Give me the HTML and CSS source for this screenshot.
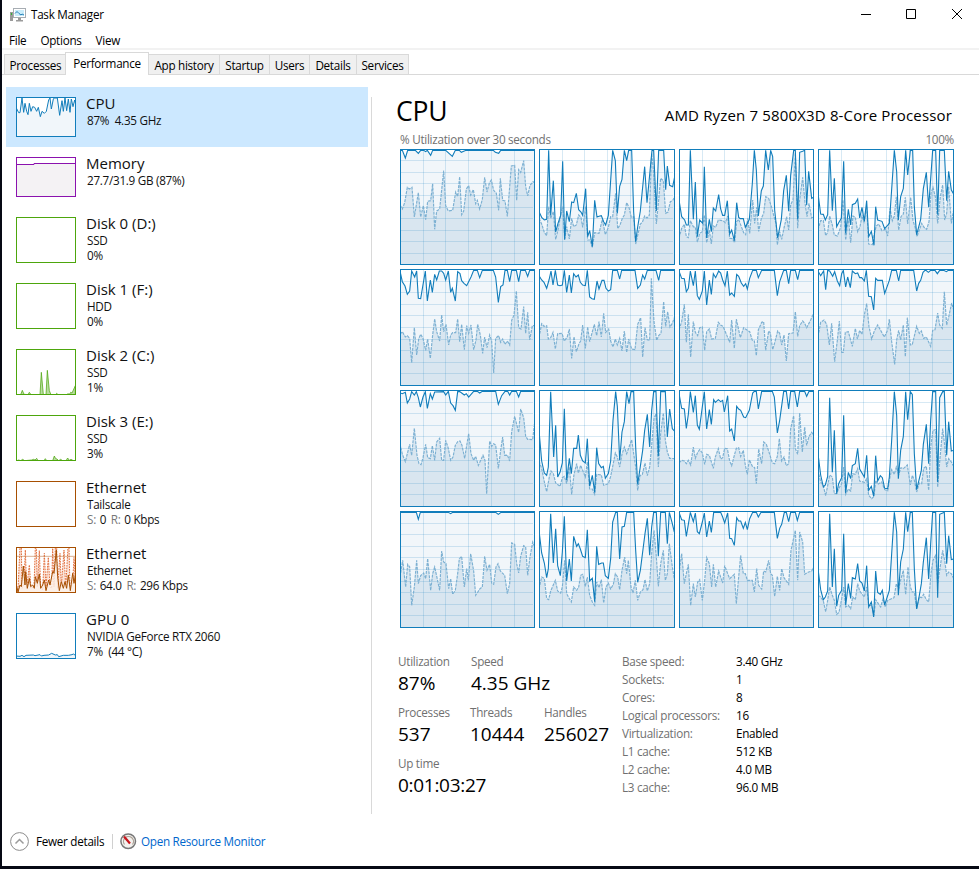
FILE: index.html
```
<!DOCTYPE html>
<html lang="en">
<head>
<meta charset="utf-8">
<title>Task Manager</title>
<link rel="stylesheet" href="styles.css">
</head>
<body>
<div class="window">
  <header class="titlebar">
    <svg class="app-icon" width="16" height="14" viewBox="0 0 16 14">
      <rect x="0" y="4" width="3" height="9" fill="#9a9a9a"/><rect x="1" y="5" width="1" height="2" fill="#2fb62f"/>
      <rect x="3.5" y=".5" width="12" height="9" fill="#fff" stroke="#a7adb3"/>
      <rect x="5" y="2" width="9" height="6" fill="#c9ecfa"/>
      <path d="M5 5.500l2-2 2 2 2 1.500 1-1 2 1" fill="none" stroke="#2580b8"/>
      <path d="M8 10h3v2h2v1.500H6V12h2z" fill="#9b9b9b"/>
    </svg>
    <span class="title">Task Manager</span>
    <svg class="controls" width="103" height="12" viewBox="0 0 103 12" fill="none" stroke="#000">
      <path d="M0 6.500h10M45.500 1.500h9v9h-9zM91 1l10 10M101 1L91 11"/>
    </svg>
  </header>
  <nav class="menu"><span>File</span><span>Options</span><span>View</span></nav>
  <div class="tabs">
    <div class="tab w61">Processes</div>
    <div class="tab active">Performance</div>
    <div class="tab w71">App history</div>
    <div class="tab w50">Startup</div>
    <div class="tab w40">Users</div>
    <div class="tab w47">Details</div>
    <div class="tab w52">Services</div>
  </div>
  <main class="content">
    <aside class="sidebar">
      <div class="item short selected">
        <svg class="thumb cpu" viewBox="51 42 174 114">
          <path class="area" d="M48 70L56 86 60 86 66 42 71 85 75 58 80 82 84 92 88 58 93 82 98 68 104 70 110 82 115 70 121 98 126 82 133 88 139 82 146 48 150 42 154 75 160 45 163 42 172 42 179 94 186 50 190 82 195 42 200 80 205 45 210 85 214 45 219 68 224 48 228 65V159H48z"/>
        </svg>
        <div class="info"><h3>CPU</h3><p>87%&nbsp; 4.35 GHz</p></div>
      </div>
      <div class="item short">
        <svg class="thumb memory" viewBox="3 3 174 114">
          <path class="area" d="M-6 22.500H54V19.500H186V126H-6z"/>
        </svg>
        <div class="info"><h3>Memory</h3><p>27.7/31.9 GB (87%)</p></div>
      </div>
      <div class="item"><svg class="thumb disk"></svg><div class="info"><h3>Disk 0 (D:)</h3><p>SSD</p><p>0%</p></div></div>
      <div class="item"><svg class="thumb disk"></svg><div class="info"><h3>Disk 1 (F:)</h3><p>HDD</p><p>0%</p></div></div>
      <div class="item">
        <svg class="thumb disk" viewBox="51 240 174 132">
          <path class="area" d="M48 374H62L67 361 72 373 84 374 88 367 93 374H120L124 307 130 374H138L142 301 148 362 153 374H167L170 370 174 374H200L204 371 208 373 212 367 216 369 226 347V378H48z"/>
        </svg>
        <div class="info"><h3>Disk 2 (C:)</h3><p>SSD</p><p>1%</p></div>
      </div>
      <div class="item">
        <svg class="thumb disk" viewBox="51 438 174 132">
          <path class="area" d="M48 573L56 570 62 572 68 568 74 572 95 570 101 568 105 570 110 565 114 572 132 572 136 566 140 572 158 572 163 558 167 566 171 567 176 572 182 568 188 572 198 572 203 564 208 571 213 568 220 572 228 572V577H48z"/>
        </svg>
        <div class="info"><h3>Disk 3 (E:)</h3><p>SSD</p><p>3%</p></div>
      </div>
      <div class="item"><svg class="thumb net"></svg><div class="info"><h3>Ethernet</h3><p>Tailscale</p><p><i>S:</i> 0 <i>R:</i> 0 Kbps</p></div></div>
      <div class="item">
        <svg class="thumb net" viewBox="51 234 174 132">
          <path class="send" d="M48 355L54 360 60 231 64 231 66 355 72 340 76 240 80 355 88 285 93 355 102 350 106 231 109 231 112 350 118 242 122 350 128 360 133 250 138 350 145 262 150 350 155 355 158 231 162 350 166 231 170 231 173 355 180 250 184 350 192 240 197 355 204 231 207 231 210 355 218 340 222 262 228 355V369H48z"/>
          <path class="rule" d="M48 259H228"/>
          <path class="area" d="M48 340L54 366 60 345 64 350 70 288 75 345 77 305 82 355 88 325 92 350 98 345 103 355 106 320 112 340 118 312 122 355 128 345 133 330 138 362 146 330 150 345 158 305 162 310 169 240 173 320 178 362 184 335 190 355 195 335 200 355 205 315 211 362 218 310 222 340 227 310V369H48z"/>
        </svg>
        <div class="info"><h3>Ethernet</h3><p>Ethernet</p><p><i>S:</i> 64.0 <i>R:</i> 296 Kbps</p></div>
      </div>
      <div class="item">
        <svg class="thumb cpu" viewBox="51 432 174 132">
          <path class="area" d="M48 558L60 559 66 556 72 560 78 556 100 555 105 557 120 554 124 558 132 556 146 555 155 550 166 555 172 554 176 560 190 556 205 556 216 554 220 552 228 557V570H48z"/>
        </svg>
        <div class="info"><h3>GPU 0</h3><p>NVIDIA GeForce RTX 2060</p><p>7%&nbsp; (44 °C)</p></div>
      </div>
    </aside>
    <section class="detail">
      <div class="heading"><h1>CPU</h1><h2>AMD Ryzen 7 5800X3D 8-Core Processor</h2></div>
      <div class="caption"><span>% Utilization over 30 seconds</span><span class="max">100%</span></div>
      <div class="charts" id="charts"></div>
      <div class="stats">
        <div class="figures">
          <div class="figure-row">
            <div class="figure f73"><span>Utilization</span><b>87%</b></div>
            <div class="figure"><span>Speed</span><b>4.35 GHz</b></div>
          </div>
          <div class="figure-row">
            <div class="figure f72"><span>Processes</span><b>537</b></div>
            <div class="figure f74"><span>Threads</span><b>10444</b></div>
            <div class="figure"><span>Handles</span><b>256027</b></div>
          </div>
          <div class="figure-row"><div class="figure uptime"><span>Up time</span><b>0:01:03:27</b></div></div>
        </div>
        <dl class="specs">
          <dt>Base speed:</dt><dd>3.40 GHz</dd>
          <dt>Sockets:</dt><dd>1</dd>
          <dt>Cores:</dt><dd>8</dd>
          <dt>Logical processors:</dt><dd>16</dd>
          <dt>Virtualization:</dt><dd>Enabled</dd>
          <dt>L1 cache:</dt><dd>512 KB</dd>
          <dt>L2 cache:</dt><dd>4.0 MB</dd>
          <dt>L3 cache:</dt><dd>96.0 MB</dd>
        </dl>
      </div>
    </section>
  </main>
  <footer class="footer">
    <svg width="20" height="20" viewBox="0 0 20 20" fill="none">
      <circle cx="9.500" cy="9.500" r="8.900" stroke="#8c8c8c"/>
      <path d="M5.500 11.500l4-4 4 4" stroke="#9a9a9a" stroke-width="1.500"/>
    </svg>
    <span class="fewer">Fewer details</span>
    <svg class="gauge" width="17" height="17" viewBox="0 0 17 17" fill="none">
      <circle cx="8.200" cy="8.200" r="7.300" fill="#f3f1ee" stroke="#777" stroke-width="1.500"/>
      <path d="M4.500 11.500a5 5 0 1 1 8 0" stroke="#aaa095" stroke-width="1.200"/>
      <path d="M4 3.500l6 7" stroke="#c8141c" stroke-width="2.200"/>
    </svg>
    <a class="monitor">Open Resource Monitor</a>
  </footer>
</div>
<script src="charts.js"></script>
</body>
</html>
```
FILE: styles.css
```
* { box-sizing: border-box; }
body { margin: 0; background: #060914; font: 11.7px/15px "Open Sans", "Noto Sans", sans-serif; letter-spacing: -0.28px; color: #000; }
h1, h2, h3, p, dl, dd { margin: 0; font-weight: 400; }
svg { display: block; flex: none; }
.window { margin-left: 2px; width: 977px; height: 866px; background: #fff; display: flex; flex-direction: column; overflow: hidden; }
.titlebar { height: 30px; display: flex; align-items: center; padding: 0 15px 0 8px; }
.title { margin: -2px 0 0 5px; }
.controls { margin-left: auto; margin-top: -2px; }
.menu { height: 20px; padding: 0 7px; display: flex; gap: 14px; line-height: 20px; border-bottom: 2px solid #f2f2f2; }
.tabs { height: 25px; padding: 2px 0 0 2px; display: flex; align-items: flex-end; background: linear-gradient(#d9d9d9, #d9d9d9) 0 100% / 100% 1px no-repeat; }
.tab { height: 21px; line-height: 20px; text-align: center; background: #f0f0f0; border: 1px solid #d9d9d9; border-left-width: 0; }
.tab:first-child { border-left-width: 1px; border-right-width: 0; padding-left: 1px; }
.active { width: 84px; height: 23px; background: #fff; border-width: 1px 1px 0; }
.w61 { width: 61px; } .w71 { width: 71px; } .w50 { width: 50px; } .w40 { width: 40px; } .w47 { width: 47px; } .w52 { width: 52px; }
.content { flex: 1; display: flex; padding-top: 12px; min-height: 0; }
.sidebar { width: 362px; margin-left: 4px; }
.item { height: 66px; padding: 10px; display: flex; gap: 10px; }
.item.short { height: 60px; }
.selected { background: #cce8ff; }
.thumb { width: 60px; height: 46px; border: 1px solid; background: #fff; }
.short .thumb { height: 40px; }
.cpu { color: #117dbb; --fill: #f1f6fa; }
.memory { color: #8b12ae; --fill: #f4f2f4; }
.disk { color: #4da60c; --fill: #b9dca0; }
.net { color: #a74f01; --fill: #fcf3eb; }
.area { fill: var(--fill); stroke: currentColor; stroke-width: 3; }
.disk .area { stroke-width: 2.200; }
.net .area { fill-opacity: .8; }
.send { fill: #fbe3d8; stroke: #e2703f; stroke-width: 3; stroke-dasharray: 5 3; }
.rule { stroke: #c98a5a; stroke-width: 2; }
.info { color: #111; margin-top: -4px; }
.info h3 { font-size: 15px; line-height: 20px; letter-spacing: 0; }
.info p { line-height: 15px; white-space: nowrap; padding-left: 1px; }
.info i { font-style: normal; color: #777; }
.info p i { margin-right: 1px; }
.info p i + i { margin-left: 2px; }
.detail { margin: 10px 0 0 3px; height: 717px; width: 600px; border-left: 1px solid #d9d9d9; padding-left: 28px; }
.heading { height: 36px; width: 554px; margin-left: -4px; display: flex; justify-content: space-between; align-items: baseline; margin-top: -4px; }
h1 { font-size: 26.500px; line-height: 36px; letter-spacing: -0.15px; }
h2 { font-size: 15px; letter-spacing: .16px; margin-right: -2px; }
.caption { height: 20px; padding-top: 3px; width: 554px; display: flex; justify-content: space-between; color: #707070; }
.charts { display: grid; grid-template-columns: 135px 136px 135px 136px; grid-template-rows: 116px 117px 117px 117px; gap: 4px; }
.chart { width: 100%; height: 100%; border: 1px solid #117dbb; background: #fff; }
.util-fill { fill: #f1f6fa; }
.kernel-fill { fill: #d9e6f0; }
.grid { stroke: #117dbb; stroke-opacity: .17; fill: none; stroke-width: 3; }
.kernel-line { fill: none; stroke: #7cb0d2; stroke-width: 3.500; stroke-dasharray: 9 3; }
.util-line { fill: none; stroke: #117dbb; stroke-width: 3.300; }
.stats { display: flex; margin: 25px 0 0 -2px; }
.figures { width: 224px; }
.figure-row { display: flex; height: 51px; }
.figure span { display: block; color: #707070; line-height: 16px; }
.figure b { display: block; font-weight: 400; font-size: 19px; line-height: 29px; letter-spacing: 0; }
.figure.uptime b { letter-spacing: -0.3px; }
.f73 { width: 73px; } .f72 { width: 72px; } .f74 { width: 74px; }
.specs { display: grid; grid-template-columns: 114px 90px; grid-auto-rows: 18px; line-height: 16px; white-space: nowrap; }
.specs dt { color: #707070; }
.footer { height: 49px; padding: 0 0 0 8px; display: flex; align-items: center; }
.fewer { margin-left: 6px; width: 77px; border-right: 1px solid #d0d0d0; }
.gauge { margin: 0 4px 0 7px; }
.monitor { color: #0066cc; }
```
FILE: charts.js
```
// One entry per logical processor: [utilization, kernel time] as x,y vertices
// in thirds of a pixel, relative to the sheet origin given in X0 and Y0.
const X0 = [[30, 447, 12, 429], [15, 432, 12, 429], [15, 432, 12, 429], [15, 432, 12, 429]];
const Y0 = [177, 12, 9, 372];
const WIDTHS = [405, 408, 405, 408];
const HEIGHTS = [348, 351, 351, 351];
const COLS = [23, 45.5, 68.5, 91.500, 114.500];
const ROWS = [12, 23.500, 35, 46.500, 58.500, 70, 81.500, 93, 104.500];

const DATA = [
[`30,181 37,181 46,204 53,181 76,181 85,190 92,181 101,181 107,185 112,181 122,196 128,181 167,181 187,199 196,181 208,181 214,187 228,181 310,181 316,187 326,190 332,181 434,181`,
 `30,345 37,357 44,338 52,292 58,297 66,292 73,381 85,308 92,381 100,347 107,389 113,334 122,332 128,281 134,418 140,363 149,357 161,242 167,347 175,363 188,361 197,306 203,320 209,260 215,374 221,363 229,297 236,287 242,315 250,299 257,341 262,331 269,357 277,328 284,262 291,306 298,279 304,270 311,301 319,310 326,361 331,265 338,331 345,333 352,379 364,228 374,226 380,331 386,239 392,247 401,212 407,290 413,318 420,286 429,275 434,278`],
[`447,365 455,382 463,390 470,388 476,181 482,376 490,272 497,426 504,400 512,376 518,214 524,449 530,363 538,395 545,336 551,338 559,310 566,359 573,366 578,376 587,296 593,440 599,422 607,470 614,331 621,381 627,379 634,377 641,395 647,405 655,376 668,181 676,212 682,370 689,289 696,268 703,181 710,212 716,181 725,181 731,366 737,455 743,411 751,363 764,230 771,338 786,181 791,181 799,363 806,181 821,181 827,299 832,228 839,286 848,290 854,260`,
 `447,385 455,402 463,427 470,437 476,350 482,385 490,365 497,448 504,420 512,375 518,350 524,447 530,410 538,447 545,385 551,410 559,405 566,375 573,382 578,412 587,350 593,450 600,450 607,472 614,428 627,430 637,388 646,434 655,412 662,380 668,380 677,310 683,416 690,405 697,385 703,375 710,338 717,352 724,382 731,380 737,462 745,428 751,402 757,397 764,378 771,384 778,376 785,190 791,250 799,402 806,330 812,265 820,272 827,370 834,366 841,335 848,332 854,320`],
[`12,330 20,380 29,390 34,405 40,405 46,181 55,388 61,276 67,440 74,390 83,400 88,230 95,444 103,388 109,425 115,354 122,363 131,314 137,357 143,376 149,376 157,332 164,432 170,420 178,452 185,338 191,382 196,386 205,386 211,412 223,388 232,280 238,181 244,240 250,378 259,302 265,288 272,181 280,240 287,181 293,200 299,360 308,444 319,388 326,302 334,256 341,364 347,256 356,181 361,181 368,388 374,187 383,184 389,181 395,346 401,244 410,325 416,322`,
 `12,445 20,415 28,403 34,440 40,443 46,392 55,410 61,412 67,456 74,430 82,425 88,375 95,458 103,420 109,462 115,408 122,412 130,390 144,392 151,398 158,378 164,445 172,446 179,458 185,395 191,388 199,410 206,428 212,434 218,385 224,430 233,330 239,400 245,352 251,424 259,385 266,370 272,320 281,325 290,352 297,380 303,400 307,464 314,425 320,448 327,414 335,380 341,420 347,344 354,330 361,190 368,415 374,330 383,262 390,338 396,380 402,340 410,384 416,380`],
[`429,310 437,372 445,373 451,390 458,374 464,181 472,362 478,265 485,410 491,398 499,385 506,214 512,430 520,358 527,405 532,344 541,340 548,327 554,384 561,352 568,394 575,332 581,440 589,424 597,466 602,350 608,390 621,394 629,416 643,400 658,181 665,245 670,390 677,320 685,295 692,181 698,255 706,181 713,181 718,350 725,434 737,388 745,296 754,247 761,352 773,181 782,181 788,374 794,181 808,181 815,332 821,244 829,300 836,312`,
 `429,420 437,392 445,392 452,437 458,427 464,378 472,405 478,435 487,438 497,412 504,330 512,450 520,384 527,458 534,378 541,382 548,425 555,410 561,378 567,395 575,350 581,462 592,464 598,430 604,408 611,402 621,422 632,418 638,438 645,355 652,392 658,378 664,320 671,420 678,380 685,372 691,322 698,402 707,322 714,392 720,410 726,440 733,420 740,400 747,412 755,418 762,395 768,310 774,292 782,325 788,400 796,320 803,285 809,390 815,370 821,290 829,400 836,360`],
[`15,18 22,50 30,63 37,88 44,78 50,18 59,36 65,18 70,100 77,101 91,18 97,108 106,45 112,82 119,28 125,45 133,18 140,18 146,25 152,45 160,18 167,82 172,70 181,108 188,20 195,26 200,47 207,55 215,62 228,36 236,16 247,16 254,38 262,16 295,16 302,36 310,112 317,65 324,60 330,16 337,16 344,50 350,16 364,16 371,50 377,16 391,16 398,34 404,16 419,16`,
 `15,208 22,200 31,216 37,212 44,220 50,293 58,188 65,270 71,222 77,208 84,220 92,256 98,222 106,280 113,210 119,162 125,200 134,228 140,150 146,200 153,178 161,240 167,210 173,203 182,203 188,162 194,230 200,178 208,254 215,182 221,205 228,180 236,254 243,225 248,178 256,210 263,265 269,216 276,248 284,210 290,228 296,324 302,220 311,212 317,232 323,222 330,238 337,228 344,240 350,166 357,150 364,78 371,188 378,192 386,125 392,205 398,142 404,225 412,182 419,182`],
[`432,32 440,45 447,52 455,70 462,45 468,18 474,60 481,16 488,60 495,62 502,60 508,16 515,82 523,30 529,84 536,26 543,36 550,30 556,52 563,60 571,62 577,16 584,96 591,101 598,103 606,48 612,72 621,46 627,46 633,70 640,78 647,74 653,16 667,16 674,42 680,16 720,16 728,70 736,60 743,30 749,42 757,16 777,16 783,16 791,46 797,16 838,16`,
 `432,218 440,176 447,184 455,182 460,222 467,218 474,202 481,252 488,206 501,205 508,228 517,215 523,192 530,280 537,215 544,260 552,236 557,228 563,180 571,250 578,186 584,230 591,204 598,178 605,212 612,170 619,216 626,145 632,202 641,192 647,228 654,246 661,222 667,240 674,220 681,258 688,198 695,262 701,222 710,252 720,254 728,178 737,158 743,276 750,188 757,224 764,226 769,40 777,170 785,226 791,212 798,205 806,110 812,184 818,140 825,186 832,175 838,158`],
[`12,18 20,40 28,41 34,80 40,70 46,18 55,62 61,18 67,92 73,103 82,78 88,18 95,120 103,45 109,88 115,26 122,38 131,18 137,24 143,45 150,62 157,18 164,90 170,84 178,94 185,28 191,34 199,54 206,64 212,56 217,72 224,40 233,16 244,16 250,38 260,16 298,16 307,92 314,50 326,16 334,16 341,56 347,16 361,16 368,44 374,16 416,16`,
 `12,195 20,170 28,118 34,232 40,148 47,276 55,170 61,202 68,212 74,188 82,186 89,256 95,200 103,192 110,222 121,220 130,172 137,180 144,184 151,200 164,232 170,165 178,250 184,162 196,218 206,188 217,196 224,200 232,226 238,228 244,272 250,195 260,172 266,170 272,256 281,198 286,204 293,254 300,230 308,198 314,205 320,240 327,210 334,288 341,206 354,204 361,140 368,214 374,182 383,168 389,175 395,188 407,165 416,144`],
[`429,18 437,32 446,18 452,74 458,16 464,18 473,34 479,20 487,48 494,62 500,26 505,16 512,66 518,36 526,68 532,18 541,26 548,24 554,38 560,38 568,48 574,16 581,94 589,95 596,135 602,40 608,46 622,46 629,85 643,46 650,16 664,16 671,48 677,16 716,16 725,78 731,55 737,46 744,22 750,16 753,16 760,22 767,16 780,16 787,26 794,16 806,16 814,20 820,16 836,16`,
 `429,215 437,172 447,165 455,178 463,240 470,175 479,290 487,226 493,168 500,262 505,262 511,202 520,200 532,244 541,190 547,222 554,196 561,208 568,150 575,116 582,185 590,222 598,198 608,180 628,216 638,195 643,162 650,230 659,298 665,225 671,196 677,225 685,180 691,275 697,158 706,240 712,238 725,184 733,205 739,198 746,220 754,216 767,244 773,196 780,194 788,144 794,180 802,190 808,80 815,180 822,152 830,114 836,135`],
[`15,18 22,20 31,16 37,48 44,36 50,14 58,24 64,14 70,32 76,60 84,30 91,14 97,64 106,20 112,36 119,15 146,14 152,24 160,13 167,48 174,56 181,70 188,14 194,14 200,18 208,24 214,20 221,30 236,13 247,13 254,18 262,13 302,13 310,52 320,26 330,13 338,13 344,24 350,13 364,13 371,30 377,13 419,13`,
 `15,170 22,202 31,224 44,172 50,205 58,124 66,205 72,230 78,233 84,212 92,172 98,212 106,215 112,176 119,220 125,165 134,154 140,220 146,220 152,160 160,184 167,220 174,210 181,175 188,164 195,162 201,175 209,214 215,176 221,140 228,200 236,220 242,208 250,235 264,205 270,220 275,320 284,162 290,178 296,170 302,174 310,244 317,190 323,150 329,205 337,204 344,222 350,134 359,88 371,136 377,66 386,92 392,148 398,157 413,158 419,105`],
[`432,130 440,222 448,258 455,265 460,240 467,14 476,210 482,115 488,270 495,256 502,228 508,65 515,280 523,214 529,260 536,184 545,184 550,144 556,205 563,222 571,228 577,155 584,298 592,265 599,316 605,182 611,230 619,242 625,238 631,274 640,260 647,222 654,100 662,14 667,58 674,220 681,135 688,104 695,14 702,50 708,14 716,14 722,180 728,292 735,245 743,190 749,130 757,82 764,180 770,70 776,14 783,14 790,208 797,14 811,14 817,150 824,66 832,125 838,132`,
 `432,222 440,244 448,285 455,314 463,270 468,252 475,260 482,288 495,298 502,272 508,268 515,290 523,240 530,322 537,262 545,230 550,258 557,235 563,250 571,270 577,225 584,306 592,306 599,322 605,262 619,264 626,295 640,290 647,268 654,234 661,198 667,210 674,240 681,202 688,180 695,200 710,158 716,200 722,240 728,310 735,266 742,262 750,228 757,266 764,240 770,175 777,95 783,80 790,240 797,140 805,78 811,160 817,195 824,214 838,215`],
[`12,20 20,64 28,66 34,124 40,82 46,14 55,76 61,26 67,114 73,127 88,14 95,126 103,68 109,112 116,38 121,46 130,38 137,44 143,40 148,75 158,26 164,132 170,126 178,162 185,58 191,66 197,70 206,90 212,92 223,70 233,18 238,13 244,13 250,66 260,13 292,13 298,30 307,138 314,100 326,13 334,13 341,66 347,13 359,13 367,60 374,13 389,13 395,28 402,13 416,13`,
 `12,228 20,220 28,222 34,230 40,220 47,234 55,180 61,214 68,196 74,188 82,198 89,232 95,202 103,205 115,244 121,210 130,185 137,216 143,212 149,184 157,185 164,222 170,236 178,205 184,184 191,182 197,208 205,190 211,235 217,262 223,218 232,238 239,242 244,290 251,186 260,230 266,165 274,172 281,192 292,228 299,230 307,208 313,155 320,222 327,210 334,236 341,230 347,125 356,86 361,185 368,202 374,78 382,195 389,120 395,175 402,148 410,136 416,145`],
[`429,200 437,264 445,300 451,294 458,268 464,32 472,256 478,130 485,320 491,290 500,272 506,85 512,318 520,256 527,275 532,236 541,230 548,184 554,246 568,270 575,205 581,310 589,298 596,328 602,206 608,282 616,266 622,272 629,304 638,305 643,270 650,160 658,14 665,85 670,275 677,190 685,148 692,14 698,98 706,14 712,22 718,200 725,308 733,275 739,250 745,172 754,112 761,230 767,100 773,14 782,14 788,285 794,32 803,14 808,14 815,205 821,104 829,192 836,190`,
 `429,250 437,285 445,296 452,326 458,296 464,264 472,270 478,320 485,320 491,305 500,290 506,240 512,322 520,306 527,312 533,260 541,262 548,245 554,282 568,286 575,275 581,325 590,335 597,328 602,280 608,292 620,285 629,308 638,312 644,275 650,248 658,262 664,240 671,262 678,242 685,245 697,234 706,294 712,265 718,280 725,315 733,288 740,290 746,244 754,238 761,310 767,180 774,130 782,128 788,300 794,225 803,125 809,175 815,240 821,215 829,225 836,238`],
[`15,376 64,376 70,397 76,376 160,376 167,380 173,376 302,376 310,382 318,376 419,376`,
 `15,570 23,520 32,600 38,532 44,540 50,655 58,600 65,520 70,590 77,566 86,558 92,575 98,515 107,610 113,560 119,540 126,572 134,610 140,492 146,525 153,530 161,605 167,575 173,622 181,610 188,560 193,515 200,508 208,600 215,545 220,580 227,500 236,552 242,625 255,605 262,600 269,508 276,550 284,532 290,588 296,592 303,540 309,530 316,552 329,565 337,620 344,590 350,468 359,472 365,530 371,558 377,508 386,476 392,480 398,565 405,510 413,465 419,480`],
[`432,430 440,498 448,528 455,572 460,545 467,380 475,528 482,425 488,536 496,566 502,495 508,388 515,582 523,516 529,582 536,448 545,478 550,470 556,486 563,508 571,512 577,428 584,582 592,574 599,644 605,478 611,532 620,528 625,528 631,566 640,574 647,515 653,405 662,376 667,376 674,516 681,420 688,418 695,376 716,376 722,490 728,586 736,550 743,495 750,440 757,394 764,505 770,420 776,376 784,376 790,508 797,376 811,376 817,470 823,376 832,410 838,435`,
 `432,606 440,570 448,574 455,635 461,638 467,612 481,580 488,612 497,618 502,600 509,520 515,620 523,635 529,645 536,600 545,610 551,600 557,565 563,562 571,598 577,570 584,625 592,645 599,655 605,585 612,602 619,578 626,648 633,600 640,588 647,606 655,592 661,560 668,570 674,608 681,550 689,510 695,560 700,520 708,600 714,618 721,580 728,640 736,615 744,608 750,578 757,612 764,590 770,500 777,430 784,510 790,598 797,530 805,490 811,580 817,560 823,470 832,540 838,575`],
[`12,376 20,398 28,400 34,448 46,376 55,404 61,378 67,434 73,440 82,405 88,378 95,450 103,402 109,436 116,376 137,376 143,390 149,408 158,378 164,454 170,455 178,475 185,392 191,402 197,402 205,424 211,406 217,428 224,395 233,376 244,376 250,390 258,376 298,376 307,454 314,424 320,412 328,376 334,376 341,404 347,376 361,376 367,400 374,376 416,376`,
 `12,560 20,500 28,590 34,560 40,532 47,655 55,590 61,630 68,585 74,578 82,640 89,580 95,512 103,530 110,600 115,532 122,600 131,552 143,588 149,536 158,560 164,575 178,562 184,650 191,570 197,505 205,560 211,560 217,580 232,580 238,615 245,545 251,595 260,606 266,552 272,555 281,520 287,560 292,565 299,628 307,568 314,610 320,545 327,572 341,592 348,490 361,430 368,580 374,435 383,465 389,562 401,555 410,552 416,540`],
[`429,545 437,608 445,638 451,630 458,612 464,380 472,600 478,485 485,658 491,625 500,610 506,440 512,655 520,590 527,634 532,572 541,576 548,530 554,582 561,588 568,612 575,536 581,660 589,645 596,690 602,552 608,616 616,622 622,610 629,654 643,610 650,500 658,376 665,435 670,625 677,525 685,486 692,376 698,434 706,376 712,376 718,545 725,666 733,625 739,590 745,525 754,452 761,576 767,470 773,376 782,376 788,632 794,382 808,376 815,530 821,446 829,518 836,516`,
 `429,625 437,630 445,642 452,674 458,640 464,600 472,625 478,640 485,682 492,676 500,635 506,600 512,660 520,655 527,665 533,630 541,638 548,590 554,612 568,630 575,600 581,655 590,655 597,685 602,638 610,650 617,660 624,635 631,660 638,640 657,632 664,590 671,605 678,575 685,550 692,622 699,540 706,600 712,615 718,615 725,665 733,630 740,632 746,622 754,638 761,645 768,560 774,520 782,505 788,590 794,550 803,490 809,520 815,565 821,555 829,560 836,575`]
];

document.getElementById('charts').innerHTML = DATA.map(([util, kernel], i) => {
  const row = Math.floor(i / 4), col = i % 4;
  const x = X0[row][col], y = Y0[row], w = WIDTHS[col], h = HEIGHTS[row];
  const close = ` ${x + w},${y + h} ${x},${y + h}`;
  const lines = COLS.map(c => `M${x + Math.floor(c) * 3 + 1.5} ${y}v${h}`).join('') +
    ROWS.map(r => `M${x} ${y + Math.floor(row ? r : r - 0.5) * 3 + 1.5}h${w - 6}`).join('');
  return `<svg class="chart" viewBox="${x + 3} ${y + 3} ${w - 6} ${h - 6}">
    <polygon class="util-fill" points="${util}${close}"/>
    <polygon class="kernel-fill" points="${kernel}${close}"/>
    <path class="grid" d="${lines}"/>
    <polyline class="kernel-line" points="${kernel}"/>
    <polyline class="util-line" points="${util}"/>
  </svg>`;
}).join('');
```
